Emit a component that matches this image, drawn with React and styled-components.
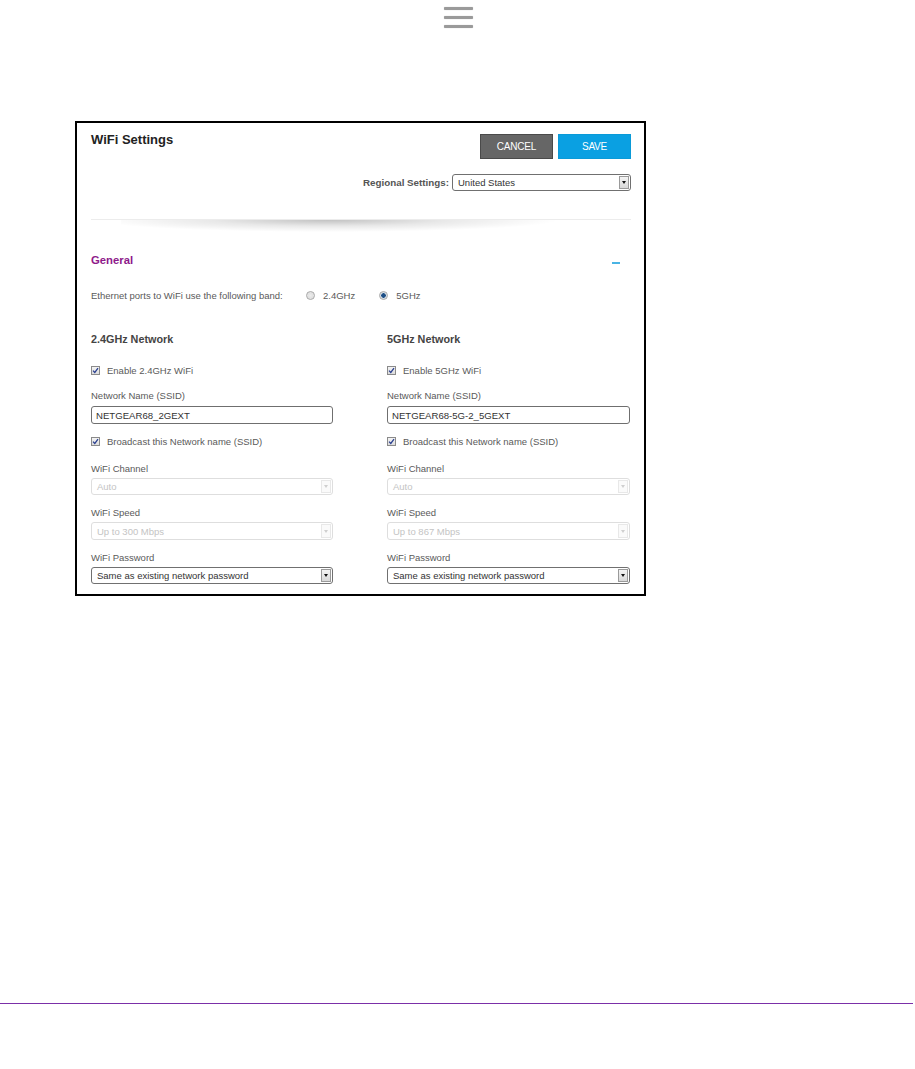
import React from "react";
import styled, { createGlobalStyle } from "styled-components";

const Global = createGlobalStyle`
  html, body { margin: 0; padding: 0; background: #fff; }
  body { font-family: "Liberation Sans", Arial, sans-serif; color: #555; }
  * { box-sizing: border-box; }
`;

const Page = styled.div`
  width: 915px;
  min-height: 1069px;
  display: flex;
  flex-direction: column;
`;

const TopBar = styled.div`
  height: 40px;
  display: flex;
  justify-content: center;
  padding-top: 7px;
`;

const Hamburger = styled.div`
  width: 29px;
  display: flex;
  flex-direction: column;
  gap: 6px;
  margin-left: 1px;
`;

const Bar = styled.span`
  display: block;
  height: 3px;
  border-radius: 1px;
  background: #9a9a9a;
  box-shadow: 0 0 1px #bbb;
`;

const Card = styled.section`
  margin: 81px 0 0 75px;
  width: 571px;
  border: 2px solid #000;
  padding: 11px 13px 10px 14px;
  display: flex;
  flex-direction: column;
`;

const HeaderRow = styled.div`
  display: flex;
  justify-content: space-between;
  align-items: flex-start;
`;

const Title = styled.h1`
  margin: 0;
  font-size: 13px;
  line-height: 12px;
  font-weight: bold;
  color: #222;
`;

const Buttons = styled.div`
  display: flex;
  gap: 5px;
`;

const Button = styled.button`
  width: 73px;
  height: 25px;
  border: 1px solid ${(p) => (p.$primary ? "#0a9ad8" : "#4a4a4a")};
  background: ${(p) => (p.$primary ? "#0aa0e2" : "#666")};
  color: #fff;
  font-family: "Liberation Sans", Arial, sans-serif;
  font-size: 10px;
  letter-spacing: -0.2px;
  padding: 0;
`;

const RegionRow = styled.div`
  margin-top: 15px;
  display: flex;
  justify-content: flex-end;
  align-items: center;
  gap: 3px;
`;

const RegionLabel = styled.span`
  font-size: 9.8px;
  font-weight: bold;
  color: #555;
`;

const Divider = styled.div`
  position: relative;
  margin-top: 28px;
  height: 1px;
  background: #ececec;
  &::after {
    content: "";
    position: absolute;
    left: 30px;
    right: 50px;
    top: 1px;
    height: 12px;
    background: radial-gradient(ellipse 50% 100% at 45% 0%, rgba(0,0,0,0.24), rgba(0,0,0,0.09) 50%, rgba(0,0,0,0) 100%);
  }
`;

const SectionHead = styled.div`
  margin-top: 33px;
  display: flex;
  justify-content: space-between;
  align-items: center;
  height: 14px;
`;

const SectionTitle = styled.h2`
  margin: 0;
  font-size: 11.3px;
  font-weight: bold;
  color: #8e1a8a;
`;

const Collapse = styled.span`
  width: 8px;
  height: 1.5px;
  background: #49b4e4;
  margin-right: 11px;
  margin-top: 6px;
`;

const BandRow = styled.div`
  margin-top: 22px;
  display: flex;
  align-items: center;
  height: 12px;
  font-size: 9.5px;
  color: #5a5a5a;
`;

const BandText = styled.span`
  width: 215px;
`;

const RadioOption = styled.label`
  display: flex;
  align-items: center;
  gap: 8px;
  margin-right: 24px;
`;

const Radio = styled.span`
  width: 9px;
  height: 9px;
  border-radius: 50%;
  border: 1px solid #a8a8a8;
  background: radial-gradient(circle, ${(p) => (p.$on ? "#1d4f86 0 2px, #cfd8e0 2.5px" : "#ececec 0, #d6d6d6 100%")});
  box-shadow: inset 0 0 1px #fff;
`;

const Columns = styled.div`
  margin-top: 31px;
  display: grid;
  grid-template-columns: 242px 243px;
  column-gap: 54px;
`;

const Column = styled.div`
  display: flex;
  flex-direction: column;
`;

const ColTitle = styled.h3`
  margin: 0;
  height: 14px;
  line-height: 14px;
  font-size: 10.8px;
  font-weight: bold;
  color: #444;
`;

const CheckRow = styled.label`
  margin-top: ${(p) => p.$mt}px;
  display: flex;
  align-items: center;
  gap: 7px;
  height: 12px;
  font-size: 9.5px;
  color: #5a5a5a;
`;

const Check = styled.span`
  width: 9px;
  height: 9px;
  border: 1px solid #8a8a8a;
  background: linear-gradient(#f4f4f4, #dcdcdc);
  display: flex;
  align-items: center;
  justify-content: center;
`;

const FieldLabel = styled.div`
  margin-top: ${(p) => p.$mt}px;
  height: 12px;
  line-height: 12px;
  font-size: 9.5px;
  color: #5a5a5a;
`;

const TextInput = styled.div`
  margin-top: 4px;
  height: 18px;
  border: 1px solid #6f6f6f;
  border-radius: 3px;
  padding-left: 4px;
  display: flex;
  align-items: center;
  font-size: 9.6px;
  color: #333;
`;

const Select = styled.div`
  margin-top: ${(p) => (p.$mt != null ? p.$mt : 3)}px;
  width: ${(p) => p.$w || "auto"};
  height: ${(p) => p.$h || 17}px;
  border: 1px solid ${(p) => (p.$disabled ? "#dedede" : "#707070")};
  border-radius: 3px;
  display: flex;
  align-items: stretch;
  font-size: 9.5px;
  color: ${(p) => (p.$disabled ? "#c4c4c4" : "#333")};
  background: #fff;
`;

const SelectValue = styled.span`
  flex: 1;
  display: flex;
  align-items: center;
  padding-left: 5px;
`;

const Arrow = styled.span`
  width: 10px;
  margin: 1px;
  border: 1px solid ${(p) => (p.$disabled ? "#e8e8e8" : "#9a9a9a")};
  background: ${(p) => (p.$disabled ? "#fafafa" : "linear-gradient(#f4f4f4, #d8d8d8)")};
  display: flex;
  align-items: center;
  justify-content: center;
  &::before {
    content: "";
    border-left: 2.5px solid transparent;
    border-right: 2.5px solid transparent;
    border-top: 3px solid ${(p) => (p.$disabled ? "#cfcfcf" : "#111")};
  }
`;

const Rule = styled.div`
  margin-top: 407px;
  width: 913px;
  height: 1px;
  background: #7b2fa8;
`;

const CheckMark = () => (
  <svg width="7" height="7" viewBox="0 0 7 7">
    <path d="M1 3.6 L2.8 5.4 L6 1.2" fill="none" stroke="#2a3f8f" strokeWidth="1.3" />
  </svg>
);

const Dropdown = ({ value, disabled, mt, h, w }) => (
  <Select $disabled={disabled} $mt={mt} $h={h} $w={w}>
    <SelectValue>{value}</SelectValue>
    <Arrow $disabled={disabled} />
  </Select>
);

const NetworkColumn = ({ title, enable, ssid, speed }) => (
  <Column>
    <ColTitle>{title}</ColTitle>
    <CheckRow $mt={18}>
      <Check><CheckMark /></Check>
      {enable}
    </CheckRow>
    <FieldLabel $mt={14}>Network Name (SSID)</FieldLabel>
    <TextInput>{ssid}</TextInput>
    <CheckRow $mt={11}>
      <Check><CheckMark /></Check>
      Broadcast this Network name (SSID)
    </CheckRow>
    <FieldLabel $mt={16}>WiFi Channel</FieldLabel>
    <Dropdown value="Auto" disabled />
    <FieldLabel $mt={12}>WiFi Speed</FieldLabel>
    <Dropdown value={speed} disabled h={18} />
    <FieldLabel $mt={12}>WiFi Password</FieldLabel>
    <Dropdown value="Same as existing network password" />
  </Column>
);

export default function App() {
  return (
    <Page>
      <Global />
      <TopBar>
        <Hamburger>
          <Bar />
          <Bar />
          <Bar />
        </Hamburger>
      </TopBar>
      <Card>
        <HeaderRow>
          <Title>WiFi Settings</Title>
          <Buttons>
            <Button>CANCEL</Button>
            <Button $primary>SAVE</Button>
          </Buttons>
        </HeaderRow>
        <RegionRow>
          <RegionLabel>Regional Settings:</RegionLabel>
          <Dropdown value="United States" mt={0} w="179px" />
        </RegionRow>
        <Divider />
        <SectionHead>
          <SectionTitle>General</SectionTitle>
          <Collapse />
        </SectionHead>
        <BandRow>
          <BandText>Ethernet ports to WiFi use the following band:</BandText>
          <RadioOption>
            <Radio />
            2.4GHz
          </RadioOption>
          <RadioOption>
            <Radio $on />
            5GHz
          </RadioOption>
        </BandRow>
        <Columns>
          <NetworkColumn
            title="2.4GHz Network"
            enable="Enable 2.4GHz WiFi"
            ssid="NETGEAR68_2GEXT"
            speed="Up to 300 Mbps"
          />
          <NetworkColumn
            title="5GHz Network"
            enable="Enable 5GHz WiFi"
            ssid="NETGEAR68-5G-2_5GEXT"
            speed="Up to 867 Mbps"
          />
        </Columns>
      </Card>
      <Rule />
    </Page>
  );
}
